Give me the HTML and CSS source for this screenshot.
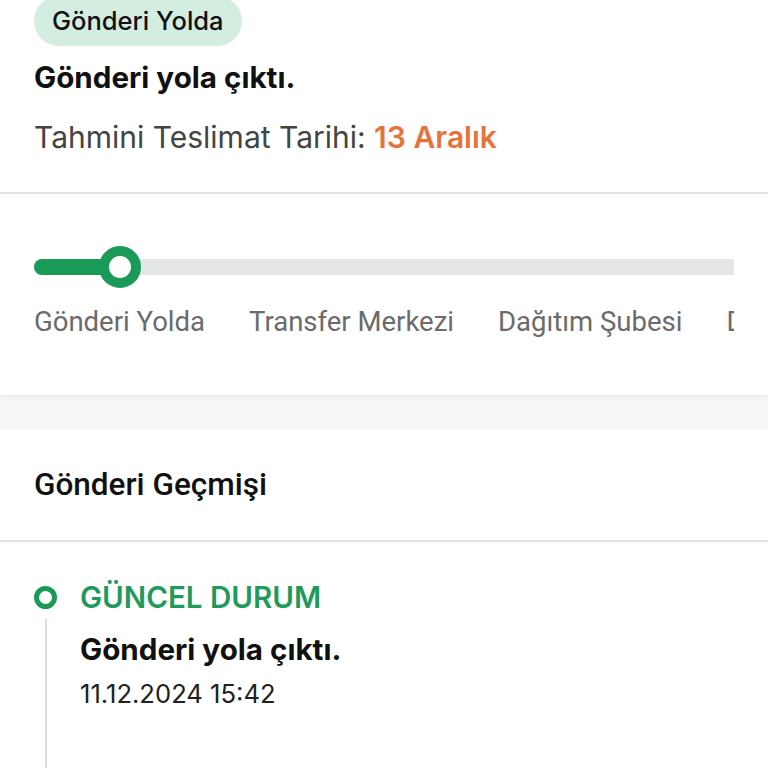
FILE: index.html
```html
<!DOCTYPE html>
<html lang="tr">
<head>
    <meta charset="UTF-8">
    <meta name="viewport" content="width=device-width, initial-scale=1.0">
    <title>Gönderi Takibi</title>
    <link rel="stylesheet" href="styles.css">
</head>
<body>

    <!-- Current status summary -->
    <div class="trk-summary">
        <span class="trk-badge">Gönderi Yolda</span>
        <div class="trk-title">Gönderi yola çıktı.</div>
        <div class="trk-eta">Tahmini Teslimat Tarihi: <span class="trk-eta-date">13 Aralık</span></div>
    </div>

    <!-- Progress steps -->
    <div class="trk-progress">
        <div class="trk-scroll">
            <div class="trk-track">
                <div class="trk-fill"></div>
                <div class="trk-knob"></div>
            </div>
            <div class="trk-steps">
                <span>Gönderi Yolda</span>
                <span>Transfer Merkezi</span>
                <span>Dağıtım Şubesi</span>
                <span>Dağıtımda</span>
            </div>
        </div>
    </div>

    <div class="trk-gap"></div>

    <!-- History -->
    <div class="trk-history">
        <div class="trk-history-head">Gönderi Geçmişi</div>
        <div class="trk-timeline">
            <div class="trk-event">
                <div class="trk-event-rail">
                    <span class="trk-dot"></span>
                    <span class="trk-line"></span>
                </div>
                <div class="trk-event-body">
                    <div class="trk-event-label">GÜNCEL DURUM</div>
                    <div class="trk-event-title">Gönderi yola çıktı.</div>
                    <div class="trk-event-date">11.12.2024 15:42</div>
                </div>
            </div>
        </div>
    </div>

</body>
</html>
```

FILE: styles.css
```css
body {
    margin: 0;
    background: #fff;
    font-family: 'Inter', 'Noto Sans', sans-serif;
    color: #111;
}

.trk-summary {
    padding: 0 34px 38px;
    border-bottom: 2px solid #e4e4e4;
}

.trk-badge {
    display: inline-block;
    margin-top: -4px;
    padding: 9px 18px;
    background: #d4ede1;
    border-radius: 26px;
    font-size: 25.5px;
    font-weight: 500;
    line-height: 32px;
    color: #111;
}

.trk-title {
    margin-top: 14px;
    font-size: 29.6px;
    font-weight: 700;
    line-height: 34px;
}

.trk-eta {
    margin-top: 26px;
    font-size: 30px;
    line-height: 34px;
    color: #444;
}

.trk-eta-date {
    color: #e8733a;
    font-weight: 600;
}

.trk-progress {
    padding: 52px 34px 56px;
    box-shadow: 0 2px 6px rgba(0, 0, 0, 0.06);
    position: relative;
}

.trk-scroll {
    overflow: hidden;
}

.trk-track {
    position: relative;
    height: 16px;
    margin: 13px 0;
    background: #e4e5e7;
    border-radius: 8px 0 0 8px;
}

.trk-fill {
    width: 100px;
    height: 100%;
    background: #1a9a58;
    border-radius: 8px;
}

.trk-knob {
    position: absolute;
    left: 65px;
    top: -13px;
    width: 22px;
    height: 22px;
    border: 10px solid #1a9a58;
    border-radius: 50%;
    background: #fff;
}

.trk-steps {
    display: flex;
    gap: 44px;
    margin-top: 30px;
    white-space: nowrap;
    font-family: 'Roboto', sans-serif;
    font-size: 27.5px;
    line-height: 34px;
    color: #6b6b6b;
}

.trk-gap {
    height: 35px;
    background: #f7f7f7;
}

.trk-history-head {
    padding: 35px 34px;
    border-bottom: 2px solid #e4e4e4;
    font-family: 'Roboto', sans-serif;
    font-size: 31.5px;
    font-weight: 500;
    line-height: 40px;
}

.trk-timeline {
    padding: 37px 34px 0;
}

.trk-event {
    display: flex;
}

.trk-event-rail {
    width: 46px;
    display: flex;
    flex-direction: column;
    align-items: flex-start;
}

.trk-dot {
    width: 13px;
    height: 13px;
    margin-top: 7px;
    border: 5px solid #1a9a58;
    border-radius: 50%;
}

.trk-line {
    width: 2px;
    height: 160px;
    margin-left: 11px;
    margin-top: 10px;
    background: #dcdcdc;
}

.trk-event-label {
    font-size: 29.5px;
    font-weight: 600;
    line-height: 36px;
    color: #1f9a5c;
}

.trk-event-title {
    margin-top: 16px;
    font-size: 29.6px;
    font-weight: 700;
    line-height: 36px;
}

.trk-event-date {
    margin-top: 11px;
    font-size: 25.6px;
    line-height: 32px;
    color: #222;
}
```
